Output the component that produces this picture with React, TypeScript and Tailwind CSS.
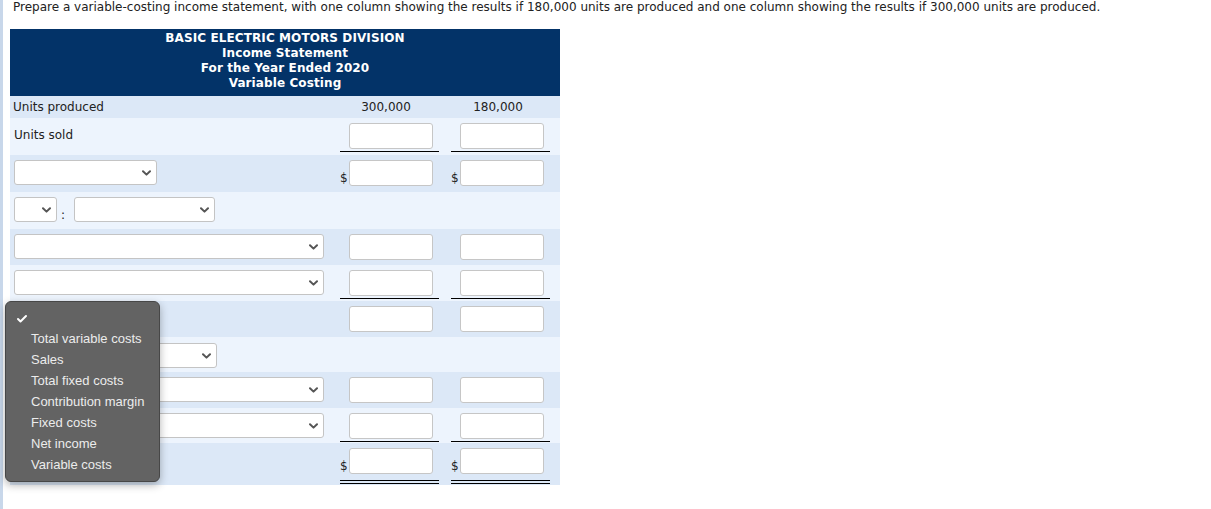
import { Check } from 'lucide-react';
import clsx from 'clsx';

type Line = 'none' | 'single' | 'double';

function Chevron() {
  return (
    <svg width="9" height="6" viewBox="0 0 9 6" className="text-[#555]">
      <path d="M1 1.2 L4.5 4.6 L8 1.2" fill="none" stroke="currentColor" strokeWidth="2" strokeLinecap="round" strokeLinejoin="round" />
    </svg>
  );
}

function Sel({ className }: { className: string }) {
  return (
    <div className={clsx('flex h-[25px] items-center justify-end rounded-[3px] border border-[#c4c4c4] bg-white pr-[5px]', className)}>
      <Chevron />
    </div>
  );
}

function Amt({ dollar, line = 'none' }: { dollar?: boolean; line?: Line }) {
  return (
    <div className="pl-[4px]">
      <div
        className={clsx(
          'flex w-[99px] items-end',
          line === 'single' && 'border-b border-black pb-[2px]',
          line === 'double' && 'border-b-[4px] border-double border-black pb-[6px]'
        )}
      >
        <span className="w-[9px] text-[12px] leading-[15px] text-[#222]">{dollar ? '$' : ''}</span>
        <div className="h-[26px] w-[84px] rounded-[3px] border border-[#c6c6c6] bg-white" />
      </div>
    </div>
  );
}

function Row({ h, dark, left, a, b }: { h: string; dark?: boolean; left?: React.ReactNode; a?: React.ReactNode; b?: React.ReactNode }) {
  return (
    <div className={clsx('flex pt-[5px]', h, dark ? 'bg-[#dce8f7]' : 'bg-[#edf4fd]')}>
      <div className="w-[326px] pl-[4px]">{left}</div>
      <div className="w-[111px]">{a}</div>
      <div className="w-[113px]">{b}</div>
    </div>
  );
}

const options = ['Total variable costs', 'Sales', 'Total fixed costs', 'Contribution margin', 'Fixed costs', 'Net income', 'Variable costs'];

export default function App() {
  return (
    <div className="relative flex min-h-[509px] bg-white text-[#222]" style={{ fontFamily: '"DejaVu Sans", Verdana, sans-serif' }}>
      <div className="w-[3px] shrink-0 bg-[#c8d7ea]" />
      <div className="pl-[7px]">
        <p className="pl-[3px] text-[12px] leading-[15px] whitespace-nowrap">
          Prepare a variable-costing income statement, with one column showing the results if 180,000 units are produced and one column showing the results if 300,000 units are produced.
        </p>

        <div className="mt-[14px] w-[550px] text-[12px]">
          <div className="flex h-[67px] flex-col items-center bg-[#033368] pt-[2px] text-[12px] font-bold leading-[15px] tracking-[0.1px] text-white">
            <div>BASIC ELECTRIC MOTORS DIVISION</div>
            <div>Income Statement</div>
            <div>For the Year Ended 2020</div>
            <div>Variable Costing</div>
          </div>

          <div className="flex h-[22px] items-center bg-[#dce8f7] pb-[1px] leading-[14px]">
            <div className="w-[326px] pl-[3px]">Units produced</div>
            <div className="w-[111px] pr-[11px] text-center">300,000</div>
            <div className="w-[113px] pr-[11px] text-center">180,000</div>
          </div>

          <Row h="h-[37px]" left={<div className="pt-[5px] leading-[14px]">Units sold</div>} a={<Amt line="single" />} b={<Amt line="single" />} />
          <Row h="h-[37px]" dark left={<Sel className="w-[143px]" />} a={<Amt dollar />} b={<Amt dollar />} />
          <Row
            h="h-[37px]"
            left={
              <div className="flex items-end">
                <Sel className="w-[43px]" />
                <span className="w-[17px] pl-[4px] leading-[14px]">:</span>
                <Sel className="w-[141px]" />
              </div>
            }
          />
          <Row h="h-[36px]" dark left={<Sel className="w-[310px]" />} a={<Amt />} b={<Amt />} />
          <Row h="h-[36px]" left={<Sel className="w-[310px]" />} a={<Amt line="single" />} b={<Amt line="single" />} />
          <Row h="h-[36px]" dark left={<Sel className="w-[143px]" />} a={<Amt />} b={<Amt />} />
          <Row
            h="h-[35px]"
            left={
              <div className="flex items-end gap-[17px] pt-[1px]">
                <Sel className="w-[43px]" />
                <Sel className="w-[143px]" />
              </div>
            }
          />
          <Row h="h-[36px]" dark left={<Sel className="w-[310px]" />} a={<Amt />} b={<Amt />} />
          <Row h="h-[35px]" left={<Sel className="w-[310px]" />} a={<Amt line="single" />} b={<Amt line="single" />} />
          <Row h="h-[42px]" dark a={<Amt dollar line="double" />} b={<Amt dollar line="double" />} />
        </div>
      </div>

      {/* open select menu */}
      <div
        className="absolute top-[301px] left-[5px] w-[155px] rounded-[6px] border border-[#474747] bg-[#636363] pt-[7px] pb-[6px] text-[13px] leading-[21px] text-[#ececec] shadow-[0_3px_8px_rgba(0,0,0,0.3)]"
        style={{ fontFamily: '"Liberation Sans", Arial, sans-serif' }}
      >
        <div className="flex h-[19px] items-center pl-[10px]">
          <Check size={12} strokeWidth={4} className="text-white" />
        </div>
        {options.map((o) => (
          <div key={o} className="pl-[25px]">{o}</div>
        ))}
      </div>
    </div>
  );
}
